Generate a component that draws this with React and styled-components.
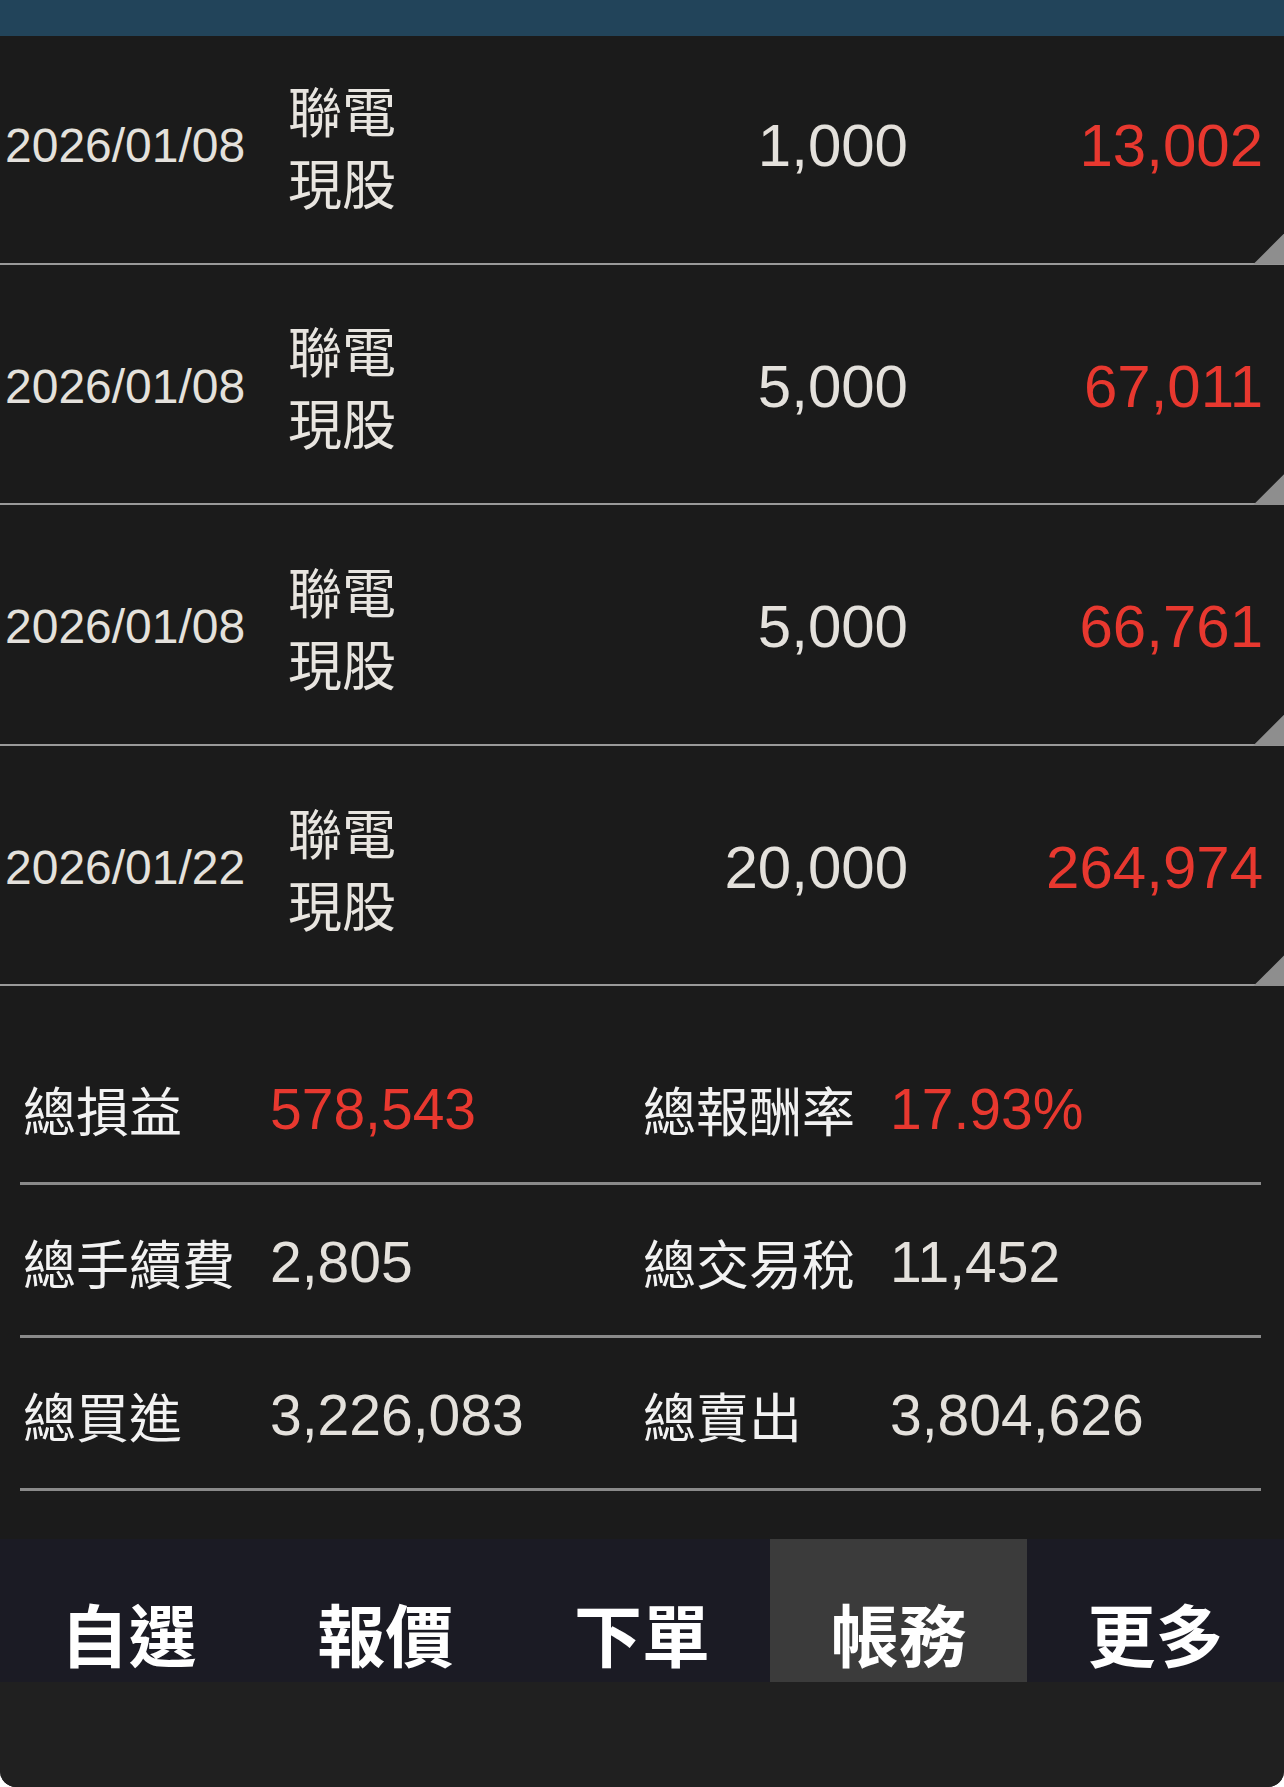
import styled, { createGlobalStyle } from "styled-components";

const GlobalStyle = createGlobalStyle`
  html, body {
    margin: 0;
    padding: 0;
    background: #ffffff;
  }
  * {
    box-sizing: border-box;
  }
`;

const trades = [
  { date: "2026/01/08", name: "聯電", kind: "現股", qty: "1,000", pnl: "13,002" },
  { date: "2026/01/08", name: "聯電", kind: "現股", qty: "5,000", pnl: "67,011" },
  { date: "2026/01/08", name: "聯電", kind: "現股", qty: "5,000", pnl: "66,761" },
  { date: "2026/01/22", name: "聯電", kind: "現股", qty: "20,000", pnl: "264,974" },
];

const summary = [
  [
    { label: "總損益", value: "578,543", red: true },
    { label: "總報酬率", value: "17.93%", red: true },
  ],
  [
    { label: "總手續費", value: "2,805" },
    { label: "總交易稅", value: "11,452" },
  ],
  [
    { label: "總買進", value: "3,226,083" },
    { label: "總賣出", value: "3,804,626" },
  ],
];

const tabs = ["自選", "報價", "下單", "帳務", "更多"];

export default function App() {
  return (
    <>
      <GlobalStyle />
      <Screen>
        <TopBar />
        <TradeList>
          {trades.map((t, i) => (
            <TradeRow key={i}>
              <DateCell>{t.date}</DateCell>
              <NameCell>
                <span>{t.name}</span>
                <span>{t.kind}</span>
              </NameCell>
              <NumberCell>{t.qty}</NumberCell>
              <NumberCell $red>{t.pnl}</NumberCell>
            </TradeRow>
          ))}
        </TradeList>

        <Summary>
          {summary.map((row, i) => (
            <SummaryRow key={i}>
              {row.map((item) => (
                <SummaryItem key={item.label}>
                  <SummaryLabel>{item.label}</SummaryLabel>
                  <SummaryValue $red={item.red}>{item.value}</SummaryValue>
                </SummaryItem>
              ))}
            </SummaryRow>
          ))}
        </Summary>

        <TabBar>
          {tabs.map((tab) => (
            <Tab key={tab} $active={tab === "帳務"}>
              {tab}
            </Tab>
          ))}
        </TabBar>
        <BottomArea />
      </Screen>
    </>
  );
}

const Screen = styled.div`
  width: 1284px;
  height: 1787px;
  background: #1b1b1b;
  display: flex;
  flex-direction: column;
  overflow: hidden;
  border-radius: 0 0 16px 16px;
  font-family: "Liberation Sans", "Noto Sans CJK TC", sans-serif;
`;

const TopBar = styled.div`
  height: 36px;
  flex-shrink: 0;
  background: #22445a;
`;

const TradeList = styled.div`
  overflow: hidden;
  flex-shrink: 0;
`;

const TradeRow = styled.div`
  position: relative;
  height: 240.6px;
  display: grid;
  grid-template-columns: 282px 150px 471px 1fr;
  align-items: center;
  padding: 5px 21px 0 5px;
  border-bottom: 2px solid #9a9a9a;

  &:first-child {
    margin-top: -12px;
  }

  &::after {
    content: "";
    position: absolute;
    right: 0;
    bottom: -2px;
    width: 31px;
    height: 31px;
    background: #8e8e8e;
    clip-path: polygon(100% 0, 100% 100%, 0 100%);
  }
`;

const DateCell = styled.div`
  font-size: 48px;
  color: #e4e1dc;
  white-space: nowrap;
`;

const NameCell = styled.div`
  display: flex;
  flex-direction: column;
  padding-left: 1px;
  font-family: "Noto Sans CJK TC", sans-serif;
  font-size: 54px;
  line-height: 72px;
  color: #e8e5e0;
`;

const NumberCell = styled.div`
  text-align: right;
  font-size: 60px;
  color: ${(p) => (p.$red ? "#e8382f" : "#e4e1dc")};
  white-space: nowrap;
`;

const Summary = styled.div`
  margin-top: 46px;
  padding: 0 23px 0 20px;
  flex-shrink: 0;
`;

const SummaryRow = styled.div`
  height: 153px;
  display: grid;
  grid-template-columns: 620px 1fr;
  align-items: center;
  padding: 4px 0 0 3px;
  border-bottom: 3px solid #8a8a8a;
`;

const SummaryItem = styled.div`
  display: grid;
  grid-template-columns: 247px 1fr;
  align-items: center;
`;

const SummaryLabel = styled.span`
  font-family: "Noto Sans CJK TC", sans-serif;
  font-size: 53px;
  color: #f2f2f2;
  white-space: nowrap;
`;

const SummaryValue = styled.span`
  font-size: 57px;
  color: ${(p) => (p.$red ? "#e8382f" : "#e4e1dc")};
  white-space: nowrap;
`;

const TabBar = styled.div`
  margin-top: 48px;
  height: 143px;
  flex-shrink: 0;
  display: grid;
  grid-template-columns: repeat(5, 1fr);
  background: #1b1b24;
`;

const Tab = styled.div`
  display: flex;
  align-items: center;
  justify-content: center;
  padding-top: 44px;
  font-family: "Noto Sans CJK TC", sans-serif;
  font-weight: 700;
  font-size: 68px;
  color: #ffffff;
  background: ${(p) => (p.$active ? "#3b3b3b" : "transparent")};
`;

const BottomArea = styled.div`
  flex: 1;
  background: #202020;
`;
